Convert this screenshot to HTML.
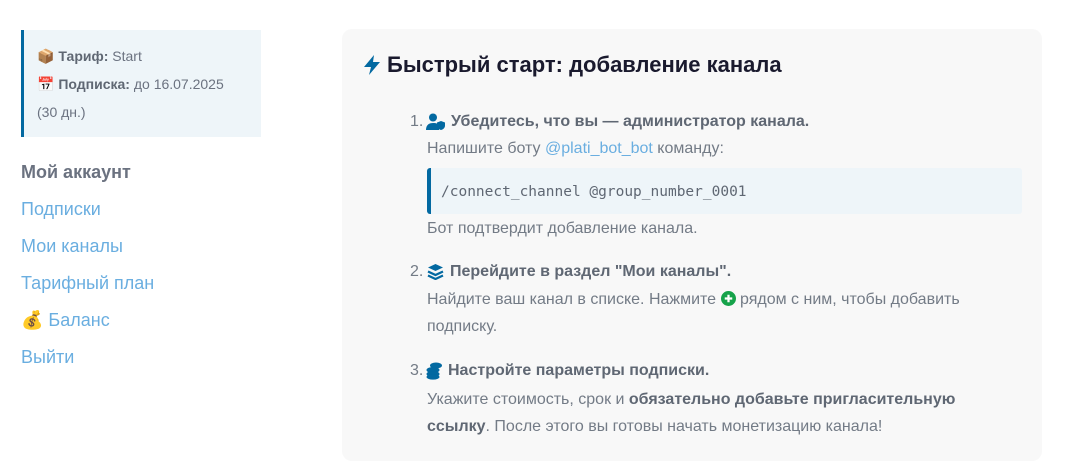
<!DOCTYPE html>
<html><head><meta charset="utf-8"><style>
body{margin:0;width:1068px;height:475px;background:#fff;font-family:"Liberation Sans","DejaVu Sans",sans-serif;position:relative;overflow:hidden;color:#6b7280}
.a{position:absolute;white-space:nowrap;line-height:20px}
.side{position:absolute;left:21px;top:30px;width:240px;height:107px;background:#eef5f9;border-left:3px solid #0369a1;box-sizing:border-box}
.s{font-size:14px;color:#6b7280}
.s b{color:#5f6773}
.m{font-size:18px;color:#6aaee0}
.card{position:absolute;left:342px;top:29px;width:700px;height:432px;background:#f8f8f8;border-radius:10px}
.t{font-size:16px;color:#737b86}
.t b{color:#5f6773}
.code{position:absolute;left:427px;top:168px;width:595px;height:46px;background:#eef5f9;border-left:4px solid #0369a1;border-radius:3px;box-sizing:border-box}
</style></head><body>
<div class="side"></div>
<div class="a s" style="left:37px;top:46px">📦 <b>Тариф:</b> Start</div>
<div class="a s" style="left:37px;top:74px">📅 <b>Подписка:</b> до 16.07.2025</div>
<div class="a s" style="left:37px;top:102px">(30 дн.)</div>
<div class="a m" style="left:21px;top:162px;color:#6b7280;font-weight:bold">Мой аккаунт</div>
<div class="a m" style="left:21px;top:199px">Подписки</div>
<div class="a m" style="left:21px;top:236px">Мои каналы</div>
<div class="a m" style="left:21px;top:273px">Тарифный план</div>
<div class="a m" style="left:21px;top:310px">💰 Баланс</div>
<div class="a m" style="left:21px;top:347px">Выйти</div>
<div class="card"></div>
<svg class="a" style="left:362px;top:54px" width="20" height="22" viewBox="0 0 20 22"><path d="M12 1L2 13h7l-2 8 11-13h-7z" fill="#0369a1"/></svg>
<div class="a" style="left:387px;top:53px;font-size:22px;line-height:24px;font-weight:bold;color:#1a1a2e">Быстрый старт: добавление канала</div>
<div class="a t" style="left:410px;top:112px">1.</div>
<svg class="a" style="left:426px;top:113px" width="20" height="18" viewBox="0 0 20 18"><circle cx="7" cy="4.5" r="4" fill="#0369a1"/><path d="M0 17c0-5 3-7 7-7s5 1 6 2v5z" fill="#0369a1"/><path d="M15 8l4 1.5v3c0 2.5-2 4-4 4.5-2-.5-4-2-4-4.5v-3z" fill="#0369a1"/></svg>
<div class="a t" style="left:451px;top:112px"><b>Убедитесь, что вы — администратор канала.</b></div>
<div class="a t" style="left:427px;top:139px">Напишите боту <span style="color:#6aaee0">@plati_bot_bot</span> команду:</div>
<div class="code"></div>
<div class="a" style="left:441px;top:182px;font-family:'DejaVu Sans Mono','Liberation Mono',monospace;font-size:14.5px;color:#5f6773">/connect_channel @group_number_0001</div>
<div class="a t" style="left:427px;top:219px">Бот подтвердит добавление канала.</div>
<div class="a t" style="left:410px;top:262px">2.</div>
<svg class="a" style="left:427px;top:263px" width="17" height="17" viewBox="0 0 17 17"><path d="M8.5 1L16 4.5 8.5 8 1 4.5z" fill="#0369a1"/><path d="M1 8.5l7.5 3.5 7.5-3.5M1 12.5l7.5 3.5 7.5-3.5" stroke="#0369a1" stroke-width="2.2" fill="none"/></svg>
<div class="a t" style="left:450px;top:262px"><b>Перейдите в раздел "Мои каналы".</b></div>
<div class="a t" style="left:427px;top:290px">Найдите ваш канал в списке. Нажмите <svg width="15" height="15" viewBox="0 0 16 16" style="vertical-align:-2px"><circle cx="8" cy="8" r="8" fill="#16a34a"/><path d="M8 4v8M4 8h8" stroke="#fff" stroke-width="2.4"/></svg> рядом с ним, чтобы добавить</div>
<div class="a t" style="left:427px;top:317px">подписку.</div>
<div class="a t" style="left:410px;top:361px">3.</div>
<svg class="a" style="left:426px;top:362px" width="17" height="18" viewBox="0 0 17 18"><ellipse cx="10" cy="3.5" rx="6" ry="3" fill="#0369a1"/><ellipse cx="7" cy="8" rx="6.5" ry="3" fill="#0369a1"/><ellipse cx="7" cy="12" rx="6.5" ry="3" fill="#0369a1"/><ellipse cx="7" cy="15" rx="6.5" ry="2.6" fill="#0369a1"/></svg>
<div class="a t" style="left:448px;top:361px"><b>Настройте параметры подписки.</b></div>
<div class="a t" style="left:427px;top:390px">Укажите стоимость, срок и <b>обязательно добавьте пригласительную</b></div>
<div class="a t" style="left:427px;top:417px"><b>ссылку</b>. После этого вы готовы начать монетизацию канала!</div>
</body></html>
